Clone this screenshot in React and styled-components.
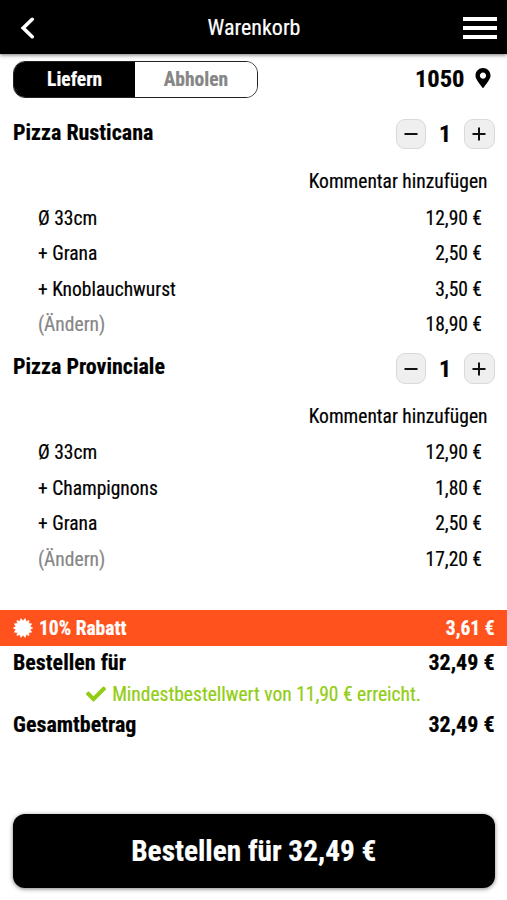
import React, { useState } from 'react';
import styled, { createGlobalStyle } from 'styled-components';
import { FaMapMarkerAlt, FaCheck } from 'react-icons/fa';

const GlobalStyle = createGlobalStyle`
  * {
    box-sizing: border-box;
  }

  body {
    margin: 0;
    background: #fff;
    color: #000;
    font-family: 'Roboto Condensed', Roboto, sans-serif;
    font-stretch: 75%;
    -webkit-text-stroke: 0.2px;
  }

  button {
    font: inherit;
    font-stretch: inherit;
    padding: 0;
    cursor: pointer;
  }
`;

const Page = styled.div`
  display: flex;
  flex-direction: column;
  height: 900px;
  overflow: hidden;
`;

const Header = styled.header`
  display: grid;
  grid-template-columns: 34px 1fr 34px;
  flex-shrink: 0;
  align-items: center;
  height: 54px;
  padding: 2px 10px 0 20px;
  background: #000;
  color: #fff;
  box-shadow: 0 1px 4px rgba(0, 0, 0, 0.55);
`;

const IconButton = styled.button`
  display: flex;
  width: 34px;
  border: none;
  background: none;
  color: inherit;
`;

const Title = styled.h1`
  margin: 0;
  padding-right: 9px;
  font-size: 22px;
  font-weight: 400;
  line-height: 26px;
  text-align: center;
`;

const Delivery = styled.div`
  display: flex;
  flex-shrink: 0;
  justify-content: space-between;
  height: 53px;
  padding: 7px 14.5px 0 13px;
`;

const Toggle = styled.div`
  display: flex;
  width: 244.5px;
  height: 36.5px;
  border: 1px solid #222;
  border-radius: 12px;
  overflow: hidden;
`;

const ToggleOption = styled.button`
  flex: 1;
  border: none;
  background: ${({ $active }) => ($active ? '#000' : '#fff')};
  color: ${({ $active }) => ($active ? '#fff' : '#868686')};
  font-size: 19.5px;
  font-weight: 700;
`;

const Location = styled.div`
  display: flex;
  align-items: center;
  gap: 8px;
  height: 35px;
  font-size: 24.5px;
  font-weight: 700;

  svg {
    margin-bottom: 2px;
  }
`;

const Item = styled.section`
  flex-shrink: 0;
  height: 234.5px;
`;

const ItemHead = styled.div`
  display: flex;
  align-items: center;
  justify-content: space-between;
  height: 56px;
  padding: 0 12.5px 0 13px;
`;

const ItemName = styled.h2`
  margin: 0;
  padding-bottom: 5px;
  font-size: 22px;
  font-weight: 700;
  line-height: 26px;
`;

const Stepper = styled.div`
  display: flex;
  align-items: center;
  padding-bottom: 2px;
`;

const StepButton = styled.button`
  display: flex;
  align-items: center;
  justify-content: center;
  width: 30.5px;
  height: 30.5px;
  border: 1px solid #d9d9d9;
  border-radius: 9px;
  background: #efefef;
`;

const Count = styled.span`
  width: 38px;
  font-size: 24px;
  font-weight: 700;
  text-align: center;
`;

const Comment = styled.div`
  height: 36.5px;
  padding-right: 19.5px;
  font-size: 19.5px;
  line-height: 37px;
  text-align: right;
`;

const Line = styled.div`
  display: flex;
  justify-content: space-between;
  height: 35.5px;
  padding: 0 25px 0 38px;
  font-size: 19.5px;
  line-height: 37px;
`;

const Label = styled.span`
  color: ${({ $muted }) => ($muted ? '#868686' : 'inherit')};
`;

const Discount = styled.div`
  display: flex;
  flex-shrink: 0;
  align-items: center;
  justify-content: space-between;
  height: 36px;
  margin-top: 33.5px;
  padding: 1px 12.5px 0 13px;
  background: #ff521d;
  color: #fff;
  font-size: 19.5px;
  font-weight: 700;
`;

const DiscountLabel = styled.span`
  display: flex;
  align-items: center;
  gap: 6px;

  svg {
    margin-bottom: 1px;
  }
`;

const Total = styled.div`
  display: flex;
  flex-shrink: 0;
  justify-content: space-between;
  height: 33px;
  padding: 0 12.5px 0 13px;
  font-size: 22px;
  font-weight: 700;
  line-height: 33px;
`;

const MinimumHint = styled.div`
  display: flex;
  flex-shrink: 0;
  align-items: center;
  justify-content: center;
  gap: 6px;
  height: 29.5px;
  padding-top: 2px;
  color: #91cd12;
  font-size: 19.5px;

  svg {
    margin-bottom: 1px;
  }
`;

const OrderButton = styled.button`
  flex-shrink: 0;
  height: 74px;
  margin: auto 12.5px 12px 13px;
  padding-bottom: 1px;
  border: none;
  border-radius: 12px;
  background: #000;
  color: #fff;
  font-size: 29.3px;
  font-weight: 700;
  box-shadow: 0 1px 4px rgba(0, 0, 0, 0.5);
`;

const items = [
  {
    name: 'Pizza Rusticana',
    lines: [
      ['Ø 33cm', '12,90 €'],
      ['+ Grana', '2,50 €'],
      ['+ Knoblauchwurst', '3,50 €'],
    ],
    total: '18,90 €',
  },
  {
    name: 'Pizza Provinciale',
    lines: [
      ['Ø 33cm', '12,90 €'],
      ['+ Champignons', '1,80 €'],
      ['+ Grana', '2,50 €'],
    ],
    total: '17,20 €',
  },
];

// 14 teeth, outer and inner radius alternating
const badgePoints = Array.from({ length: 28 }, (_, i) => {
  const radius = i % 2 ? 7.2 : 9.7;
  const angle = (i * Math.PI) / 14;
  return `${(10 + radius * Math.cos(angle)).toFixed(2)},${(10 + radius * Math.sin(angle)).toFixed(2)}`;
}).join(' ');

const BadgeIcon = () => (
  <svg width="20" height="20" viewBox="0 0 20 20">
    <polygon points={badgePoints} fill="#fff" stroke="#fff" strokeWidth="0.6" strokeLinejoin="round" />
  </svg>
);

const CartItem = ({ item }) => {
  const [count, setCount] = useState(1);

  return (
    <Item>
      <ItemHead>
        <ItemName>{item.name}</ItemName>
        <Stepper>
          <StepButton aria-label="weniger" onClick={() => setCount(Math.max(1, count - 1))}>
            <svg width="14" height="14" viewBox="0 0 14 14">
              <path d="M0.5 7h13" stroke="#111" strokeWidth="2" />
            </svg>
          </StepButton>
          <Count>{count}</Count>
          <StepButton aria-label="mehr" onClick={() => setCount(count + 1)}>
            <svg width="14" height="14" viewBox="0 0 14 14">
              <path d="M0.5 7h13M7 0.5v13" stroke="#111" strokeWidth="2" />
            </svg>
          </StepButton>
        </Stepper>
      </ItemHead>
      <Comment>Kommentar hinzufügen</Comment>
      {item.lines.map(([label, price]) => (
        <Line key={label}>
          <Label>{label}</Label>
          <span>{price}</span>
        </Line>
      ))}
      <Line>
        <Label $muted>(Ändern)</Label>
        <span>{item.total}</span>
      </Line>
    </Item>
  );
};

const App = () => {
  const [delivery, setDelivery] = useState(true);

  return (
    <Page>
      <GlobalStyle />
      <Header>
        <IconButton aria-label="zurück">
          <svg width="16" height="22" viewBox="0 0 16 22">
            <path d="M12.2 2.3L3.2 11l9 8.7" fill="none" stroke="#fff" strokeWidth="3.6" strokeLinecap="round" />
          </svg>
        </IconButton>
        <Title>Warenkorb</Title>
        <IconButton aria-label="Menü">
          <svg width="34" height="24" viewBox="0 0 34 24">
            <path d="M0 3h34M0 12h34M0 21h34" stroke="#fff" strokeWidth="4" />
          </svg>
        </IconButton>
      </Header>
      <Delivery>
        <Toggle>
          <ToggleOption $active={delivery} onClick={() => setDelivery(true)}>Liefern</ToggleOption>
          <ToggleOption $active={!delivery} onClick={() => setDelivery(false)}>Abholen</ToggleOption>
        </Toggle>
        <Location>
          1050
          <FaMapMarkerAlt size={20} />
        </Location>
      </Delivery>
      {items.map((item) => (
        <CartItem key={item.name} item={item} />
      ))}
      <Discount>
        <DiscountLabel>
          <BadgeIcon />
          10% Rabatt
        </DiscountLabel>
        <span>3,61 €</span>
      </Discount>
      <Total>
        <span>Bestellen für</span>
        <span>32,49 €</span>
      </Total>
      <MinimumHint>
        <FaCheck size={20} />
        Mindestbestellwert von 11,90 € erreicht.
      </MinimumHint>
      <Total>
        <span>Gesamtbetrag</span>
        <span>32,49 €</span>
      </Total>
      <OrderButton>Bestellen für 32,49 €</OrderButton>
    </Page>
  );
};

export default App;
